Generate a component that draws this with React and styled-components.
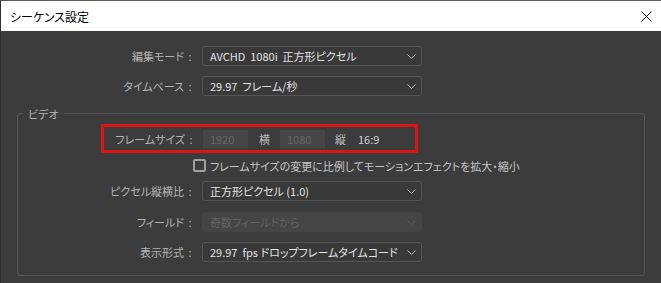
import React from 'react';
import styled, { createGlobalStyle } from 'styled-components';

const GlobalStyle = createGlobalStyle`
  html, body {
    margin: 0;
    padding: 0;
    height: 283px;
    overflow: hidden;
    background: #3c3c3c;
  }
  body {
    font-family: "Noto Sans CJK JP", "Noto Sans", sans-serif;
    font-size: 11px;
    font-feature-settings: "palt";
  }
`;

const Window = styled.div`
  width: 661px;
  height: 283px;
  display: flex;
  flex-direction: column;
  box-sizing: border-box;
  border-left: 1px solid #2e2e2e;
  border-top: 1px solid #5a5a5a;
`;

const TitleBar = styled.div`
  height: 30px;
  background: #ffffff;
  display: flex;
  align-items: center;
  justify-content: space-between;
  padding: 0 9px 0 9px;
  color: #000000;
  font-size: 12px;
`;

const CloseButton = styled.div`
  width: 11px;
  height: 11px;
  display: flex;
`;

const Body = styled.div`
  flex: 1;
  background: #3c3c3c;
  padding-top: 15px;
  display: flex;
  flex-direction: column;
`;

const Row = styled.div`
  display: flex;
  align-items: center;
  height: 20px;
  margin-top: ${(p) => p.$top || 0}px;
`;

const Label = styled.div`
  width: ${(p) => p.$width}px;
  text-align: right;
  color: #b4b4b4;
  margin-right: 6px;
  white-space: nowrap;
`;

const Colon = styled.span`
  display: inline-block;
  width: 12px;
  text-align: center;
`;

const Select = styled.div`
  width: 220px;
  height: 20px;
  box-sizing: border-box;
  border: 1px solid ${(p) => (p.$disabled ? '#454545' : '#555555')};
  background: ${(p) => (p.$disabled ? '#454545' : '#393939')};
  border-radius: 3px;
  display: flex;
  align-items: center;
  justify-content: space-between;
  padding: 0 5px 0 7px;
  color: ${(p) => (p.$disabled ? '#626262' : '#e2e2e2')};
  white-space: nowrap;
`;

const Chevron = ({ dim }) => (
  <svg width="9" height="5" viewBox="0 0 9 5">
    <polyline
      points="0.5,0.5 4.5,4.5 8.5,0.5"
      fill="none"
      stroke={dim ? '#5c5c5c' : '#bdbdbd'}
      strokeWidth="1"
    />
  </svg>
);

const Group = styled.div`
  position: relative;
  margin: 17px 16px 0 16px;
  border: 1px solid #555555;
  border-radius: 3px;
  padding: 10px 0 13px 0;
`;

const Legend = styled.span`
  position: absolute;
  top: -8px;
  left: 5px;
  padding: 0 5px;
  background: #3c3c3c;
  color: #b4b4b4;
  line-height: 16px;
`;

const Highlight = styled.div`
  display: flex;
  align-items: center;
  width: 317px;
  height: 29px;
  box-sizing: border-box;
  margin-left: 83px;
  border: 3px solid #dc1414;
`;

const NumberBox = styled.div`
  width: 45px;
  height: 18px;
  background: #464646;
  color: #686868;
  display: flex;
  align-items: center;
  padding-left: 7px;
  box-sizing: border-box;
  margin-right: ${(p) => p.$gap}px;
`;

const Unit = styled.span`
  color: ${(p) => (p.$bright ? '#d2d2d2' : '#bdbdbd')};
  margin-right: ${(p) => p.$gap || 0}px;
`;

const CheckRow = styled.label`
  display: flex;
  align-items: center;
  margin: 6px 0 0 175px;
  height: 13px;
  color: #c4c4c4;
  white-space: nowrap;
`;

const CheckBox = styled.span`
  width: 13px;
  height: 13px;
  box-sizing: border-box;
  border: 2px solid #a0a0a0;
  border-radius: 2px;
  margin-right: 4px;
`;

const FieldLabel = ({ width, children }) => (
  <Label $width={width}>
    {children}
    <Colon>:</Colon>
  </Label>
);

export default function App() {
  return (
    <>
      <GlobalStyle />
      <Window>
        <TitleBar>
          <span>シーケンス設定</span>
          <CloseButton>
            <svg width="11" height="11" viewBox="0 0 11 11">
              <path d="M0.5 0.5 L10.5 10.5 M10.5 0.5 L0.5 10.5" stroke="#000" strokeWidth="1" />
            </svg>
          </CloseButton>
        </TitleBar>
        <Body>
          <Row>
            <FieldLabel width={195}>編集モード</FieldLabel>
            <Select>
              <span>AVCHD&nbsp; 1080i&nbsp; 正方形ピクセル</span>
              <Chevron />
            </Select>
          </Row>
          <Row $top={10}>
            <FieldLabel width={195}>タイムベース</FieldLabel>
            <Select>
              <span>29.97&nbsp; フレーム/秒</span>
              <Chevron />
            </Select>
          </Row>
          <Group>
            <Legend>ビデオ</Legend>
            <Highlight>
              <FieldLabel width={93}>フレームサイズ</FieldLabel>
              <NumberBox $gap={11}>1920</NumberBox>
              <Unit $gap={10}>横</Unit>
              <NumberBox $gap={10}>1080</NumberBox>
              <Unit $gap={12}>縦</Unit>
              <Unit $bright>16:9</Unit>
            </Highlight>
            <CheckRow>
              <CheckBox />
              フレームサイズの変更に比例してモーションエフェクトを拡大・縮小
            </CheckRow>
            <Row $top={9}>
              <FieldLabel width={178}>ピクセル縦横比</FieldLabel>
              <Select>
                <span>正方形ピクセル (1.0)</span>
                <Chevron />
              </Select>
            </Row>
            <Row $top={11}>
              <FieldLabel width={178}>フィールド</FieldLabel>
              <Select $disabled>
                <span>奇数フィールドから</span>
                <Chevron dim />
              </Select>
            </Row>
            <Row $top={10}>
              <FieldLabel width={178}>表示形式</FieldLabel>
              <Select>
                <span>29.97&nbsp; fps ドロップフレームタイムコード</span>
                <Chevron />
              </Select>
            </Row>
          </Group>
        </Body>
      </Window>
    </>
  );
}
